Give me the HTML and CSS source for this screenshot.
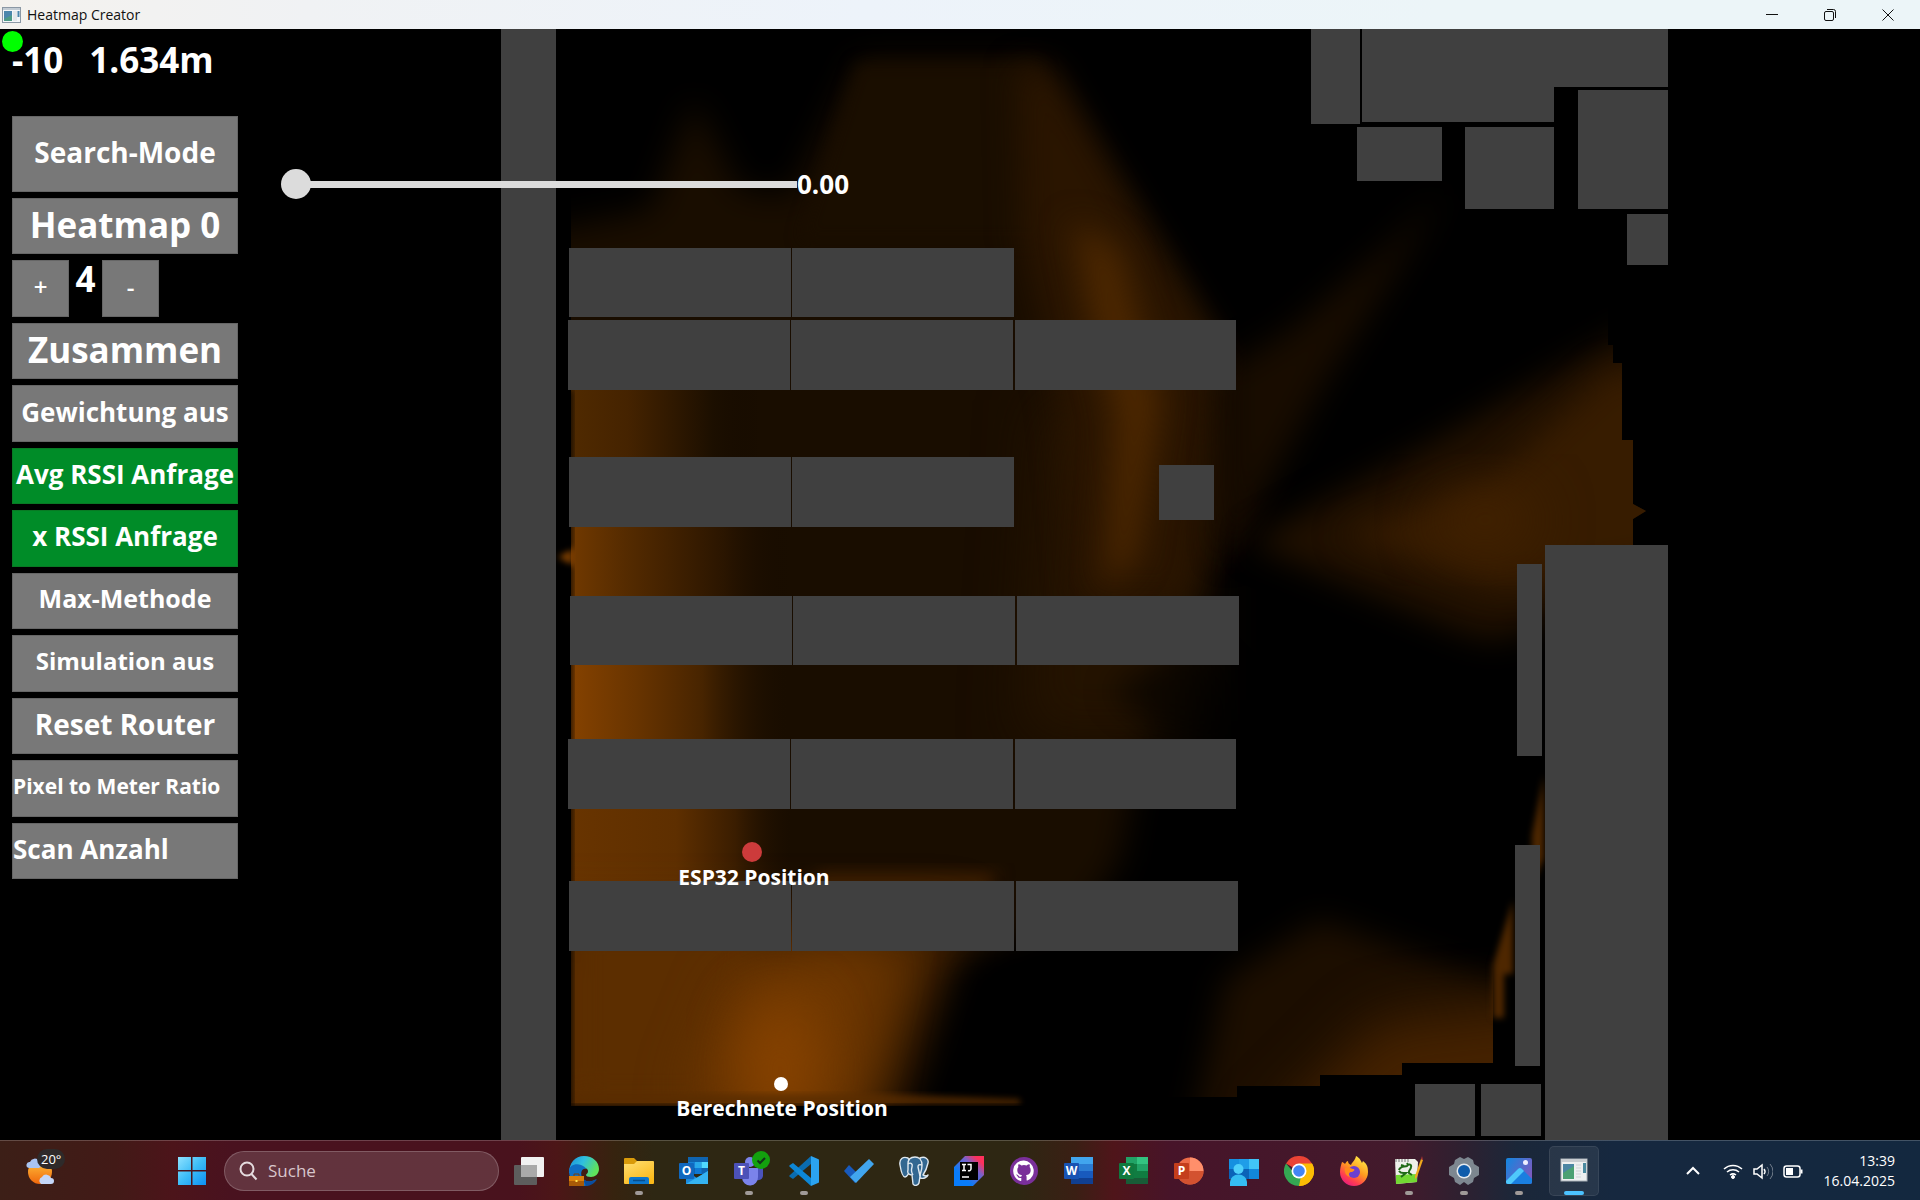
FILE: index.html
```html
<!DOCTYPE html>
<html lang="de">
<head>
<meta charset="utf-8">
<title>Heatmap Creator</title>
<link rel="stylesheet" href="styles.css">
</head>
<body>
<div class="desktop">
  <header class="titlebar">
    <svg class="titlebar-icon" viewBox="0 0 19 16"><rect x=".5" y=".5" width="18" height="15" fill="#f4f6f8" stroke="#8b98a5"/><rect x="1" y="1" width="17" height="2" fill="#c3ccd4"/><rect x="2" y="4" width="8" height="10" fill="#4d9a86"/><path d="M2 4h8v4L2 12z" fill="#4b86ac"/><rect x="11" y="4" width="4" height="10" fill="#e4e7ea"/><rect x="15.500" y="4" width="2" height="6" fill="#4b86ac"/></svg>
    <h1 class="titlebar-text">Heatmap Creator</h1>
    <div class="window-controls">
      <button class="window-button" aria-label="Minimieren"><svg viewBox="0 0 12 12"><path d="M0 5.500h12"/></svg></button>
      <button class="window-button" aria-label="Wiederherstellen"><svg viewBox="0 0 12 12"><rect x=".5" y="2.500" width="9" height="9" rx="1.500"/><path d="M3 .5h6.500a2 2 0 0 1 2 2V9"/></svg></button>
      <button class="window-button" aria-label="Schließen"><svg viewBox="0 0 12 12"><path d="M.5.5l11 11M11.500.5l-11 11"/></svg></button>
    </div>
  </header>

  <main class="stage">
    <svg class="map" viewBox="0 29 1920 1111" preserveAspectRatio="xMinYMin slice">
      <defs>
        <filter id="b3" color-interpolation-filters="sRGB" x="-20%" y="-20%" width="140%" height="140%"><feGaussianBlur stdDeviation="3"/></filter>
        <filter id="b8" color-interpolation-filters="sRGB" x="-30%" y="-30%" width="160%" height="160%"><feGaussianBlur stdDeviation="8"/></filter>
        <filter id="b16" color-interpolation-filters="sRGB" x="-60%" y="-50%" width="220%" height="200%"><feGaussianBlur stdDeviation="16"/></filter>
        <filter id="b28" color-interpolation-filters="sRGB" x="-80%" y="-60%" width="260%" height="220%"><feGaussianBlur stdDeviation="28"/></filter>
        <clipPath id="hall"><path d="M571 29H1290V700H1240V1106H571z"/></clipPath>
        <clipPath id="fan"><path d="M1200 300H1608V345H1613V363H1622V440H1633V504L1646 511L1633 519V720H1200z"/></clipPath>
        <clipPath id="lower"><path d="M1130 860H1493V1063H1402V1075H1320V1086H1237V1097H1130z"/></clipPath>
        <linearGradient id="gA" gradientUnits="userSpaceOnUse" x1="571" x2="760" y1="0" y2="0"><stop offset="0" stop-color="#502a00"/><stop offset=".3" stop-color="#452300"/><stop offset=".75" stop-color="#1c0f00"/><stop offset="1" stop-color="#140a00" stop-opacity="0"/></linearGradient>
        <linearGradient id="gB" gradientUnits="userSpaceOnUse" x1="571" x2="790" y1="0" y2="0"><stop offset="0" stop-color="#713900"/><stop offset=".25" stop-color="#552b00"/><stop offset=".7" stop-color="#2a1500"/><stop offset="1" stop-color="#140a00" stop-opacity="0"/></linearGradient>
        <linearGradient id="gC" gradientUnits="userSpaceOnUse" x1="571" x2="790" y1="0" y2="0"><stop offset="0" stop-color="#854200"/><stop offset=".3" stop-color="#683400"/><stop offset=".6" stop-color="#472400"/><stop offset="1" stop-color="#180d00" stop-opacity="0"/></linearGradient>
        <linearGradient id="gD" gradientUnits="userSpaceOnUse" x1="571" x2="790" y1="0" y2="0"><stop offset="0" stop-color="#683400"/><stop offset=".48" stop-color="#5e2f00"/><stop offset=".75" stop-color="#3a1d00"/><stop offset="1" stop-color="#201000" stop-opacity="0"/></linearGradient>
      </defs>
      <rect y="29" width="1920" height="1111" fill="#000"/>

      <g clip-path="url(#hall)">
        <path d="M500 330V240L650 210L694 100L740 190L790 195L860 60H1040L1240 380V520L1160 640L1120 860L1050 960H500z" fill="#190d00" filter="url(#b16)"/>
        <path d="M858 64H1040L1060 240H800z" fill="#1a0e00" filter="url(#b8)"/>
        <path d="M1040 400H1200V740H1020z" fill="#241300" filter="url(#b28)"/>
        <path d="M1018 68H1050L1110 170L1215 340L1190 600H1080L1060 400L1022 240z" fill="#2a1500" filter="url(#b16)"/>
        <path d="M1072 220L1120 250L1162 400L1135 560L1105 590L1115 420L1090 320z" fill="#4c2700" filter="url(#b16)"/>
        <path d="M1110 690L1170 740L1240 760V690L1190 640z" fill="#000" opacity=".6" filter="url(#b16)"/>
        <rect x="571" y="320" width="200" height="150" fill="url(#gA)"/>
        <rect x="571" y="500" width="220" height="120" fill="url(#gB)"/>
        <rect x="571" y="640" width="220" height="110" fill="url(#gC)"/>
        <rect x="571" y="780" width="220" height="120" fill="url(#gD)"/>
        <path d="M820 872H1000L980 900H800z" fill="#3a1d00" filter="url(#b8)"/>
        <path d="M480 920H960L860 1180H480z" fill="#5c2e00" filter="url(#b28)"/>
        <path d="M571 920H760L720 1106H571z" fill="#5c2e00" filter="url(#b16)"/>
        <path d="M740 980L880 940L850 1106H690z" fill="#703800" filter="url(#b28)"/>
        <ellipse cx="780" cy="1070" rx="36" ry="70" fill="#884300" filter="url(#b28)"/>
        <path d="M1030 930L970 970L925 1140H1300V930z" fill="#000" filter="url(#b16)"/>
        <path d="M571 1094H880L1020 1099V1106H571z" fill="#5a2d00" opacity=".8" filter="url(#b3)"/>
      </g>
      <path d="M558 557L573 548V566z" fill="#7a3d00" filter="url(#b3)"/>
      <path d="M564 390H573V548H564zM564 566H573V1108H564z" fill="#000" opacity=".7" filter="url(#b3)"/>
      <path d="M566 1105H1030V1114H566z" fill="#000" opacity=".8" filter="url(#b3)"/>

      <path d="M1445 190L1390 245L1290 330L1225 370V560L1260 500L1320 390L1390 280z" fill="#180c00" filter="url(#b16)"/>

      <g clip-path="url(#fan)">
        <path d="M1248 543L1420 450L1630 330H1680V560L1500 640L1470 635z" fill="#201000" filter="url(#b16)"/>
        <path d="M1340 535L1490 480L1610 370H1680V560L1500 590z" fill="#371c00" filter="url(#b16)"/>
        <ellipse cx="1485" cy="520" rx="50" ry="30" fill="#432200" filter="url(#b28)"/>
      </g>

      <g clip-path="url(#lower)">
        <path d="M1190 1140L1225 980L1320 920L1540 1000V1140z" fill="#1c0e00" filter="url(#b16)"/>
        <path d="M1260 1140L1380 1020L1560 1000V1140z" fill="#452200" filter="url(#b28)"/>
      </g>
      <path d="M1544 775V858L1532 885V835zM1513 900V974H1504V1018H1493V965z" fill="#4e2700" filter="url(#b3)"/>

      <g class="shelves">
        <rect x="501" y="29" width="55" height="1111"/>
        <rect x="569" y="248" width="222" height="69"/><rect x="792" y="248" width="222" height="69"/>
        <rect x="568" y="320" width="222" height="70"/><rect x="791" y="320" width="222" height="70"/><rect x="1015" y="320" width="221" height="70"/>
        <rect x="569" y="457" width="222" height="70"/><rect x="792" y="457" width="222" height="70"/>
        <rect x="1159" y="465" width="55" height="55"/>
        <rect x="570" y="596" width="222" height="69"/><rect x="793" y="596" width="222" height="69"/><rect x="1017" y="596" width="222" height="69"/>
        <rect x="568" y="739" width="222" height="70"/><rect x="791" y="739" width="222" height="70"/><rect x="1015" y="739" width="221" height="70"/>
        <rect x="569" y="881" width="222" height="70"/><rect x="792" y="881" width="222" height="70"/><rect x="1016" y="881" width="222" height="70"/>
        <rect x="1311" y="29" width="49" height="95"/>
        <path d="M1362 29H1668V87H1554V122H1362z"/>
        <rect x="1357" y="127" width="85" height="54"/><rect x="1465" y="127" width="89" height="82"/>
        <rect x="1578" y="90" width="90" height="119"/><rect x="1627" y="214" width="41" height="51"/>
        <rect x="1545" y="545" width="123" height="595"/>
        <rect x="1517" y="564" width="25" height="192"/><rect x="1515" y="845" width="25" height="221"/>
        <rect x="1415" y="1084" width="60" height="52"/><rect x="1481" y="1084" width="60" height="52"/>
      </g>

      <circle cx="752" cy="852" r="10" fill="#cc3b3b"/>
      <text class="map-label" x="754" y="885">ESP32 Position</text>
      <circle cx="781" cy="1084" r="7" fill="#fff"/>
      <text class="map-label" x="782" y="1116">Berechnete Position</text>
    </svg>

    <div class="overlay">
      <span class="status-dot"></span>
      <aside class="sidebar">
        <p class="readout"><span>-10</span><span>1.634m</span></p>
        <button class="tool tool-tall size-28">Search-Mode</button>
        <div class="tool-list">
          <button class="tool size-35">Heatmap 0</button>
          <div class="stepper">
            <button class="tool tool-step size-24">+</button>
            <output class="stepper-value">4</output>
            <button class="tool tool-step size-24">-</button>
          </div>
          <button class="tool size-35">Zusammen</button>
          <button class="tool size-26">Gewichtung aus</button>
          <button class="tool tool-on size-26">Avg RSSI Anfrage</button>
          <button class="tool tool-on size-26">x RSSI Anfrage</button>
          <button class="tool size-25">Max-Methode</button>
          <button class="tool size-24">Simulation aus</button>
          <button class="tool size-28">Reset Router</button>
          <button class="tool tool-left size-21">Pixel to Meter Ratio</button>
          <button class="tool tool-left size-26">Scan Anzahl</button>
        </div>
      </aside>
      <div class="slider">
        <input class="slider-input" id="level" type="range" min="0" max="1" step="0.01" value="0">
        <label class="slider-value" for="level">0.00</label>
      </div>
    </div>
  </main>

  <footer class="taskbar">
    <button class="weather" aria-label="Wetter">
      <svg viewBox="0 0 30 30"><defs><linearGradient id="sun" x2="0" y2="1"><stop stop-color="#ffc23c"/><stop offset="1" stop-color="#f0670c"/></linearGradient></defs><circle cx="14" cy="16" r="12" fill="url(#sun)"/><path d="M3 12a3 3 0 0 1 1-6 5 5 0 0 1 9-1 4 4 0 0 1 0 7z" fill="#a9c4f2"/><path d="M15 28a4 4 0 0 1 1-7 5 5 0 0 1 9 1 3 3 0 0 1 0 6z" fill="#c4d6f8"/></svg>
      <span class="weather-badge">20°</span>
    </button>
    <nav class="apps">
      <button class="app" aria-label="Start"><svg viewBox="0 0 30 30"><defs><linearGradient id="win" gradientUnits="userSpaceOnUse" x1="1" y1="1" x2="29" y2="29"><stop stop-color="#8fe2ff"/><stop offset=".5" stop-color="#3cbcf7"/><stop offset="1" stop-color="#0c90f3"/></linearGradient></defs><path fill="url(#win)" d="M1 1h13v13H1zM15.500 1H29v13H15.500zM1 15.500h13V29H1zM15.500 15.500H29V29H15.500z"/></svg></button>
      <label class="search"><svg viewBox="0 0 20 20"><circle cx="9" cy="8" r="6.500"/><path d="M13.500 13l5 5.500"/></svg><input class="search-input" type="text" placeholder="Suche"></label>
      <button class="app" aria-label="Aktive Anwendungen"><svg viewBox="0 0 30 30"><rect x="7" y="1" width="23" height="20" rx="1" fill="#f1f1f1"/><rect y="9" width="23" height="20" rx="1" fill="#5d5d5d"/><rect x="7" y="9" width="16" height="12" fill="#a9a9a9"/></svg></button>
      <button class="app" aria-label="Edge"><svg viewBox="0 0 30 30"><defs><linearGradient id="ed" x2="1" y2=".4"><stop stop-color="#1a8fd6"/><stop offset=".5" stop-color="#2fbfe0"/><stop offset="1" stop-color="#5fe35c"/></linearGradient></defs><path d="M0 17C0 7 6 0 15 0c9 0 15 6 15 13 0 5-4 8-8 8-3 0-5-1-5-2 0-1 2-1 2-4 0-2-2-3-4-3z" fill="url(#ed)"/><path d="M0 15c0-5 6-8 12-6 3 1 5 3 5 4-4-1-6 4-4 8 2 5 9 6 14 2-2 4-7 7-12 7C6 30 0 24 0 15z" fill="#0f6fc4"/><path d="M13 21c2 5 9 6 15 2-2 4-6 7-11 7z" fill="#0b4d9e"/><rect y="20" width="15" height="10" fill="#d97f0c"/><path d="M0 25h15v5H0z" fill="#a85a07"/><path d="M5 20v-2h5v2" fill="none" stroke="#7c4108"/><rect x="6.500" y="24" width="2" height="2" fill="#ffe34f"/></svg></button>
      <button class="app is-running" aria-label="Explorer"><svg viewBox="0 0 30 30"><defs><linearGradient id="fo" x2=".6" y2="1"><stop stop-color="#ffdf73"/><stop offset="1" stop-color="#fbb91a"/></linearGradient></defs><path d="M0 3a1 1 0 0 1 1-1h9l3 3v5H0z" fill="#d99a0a"/><path d="M0 8h10l3-3h16a1 1 0 0 1 1 1v21a1 1 0 0 1-1 1H1a1 1 0 0 1-1-1z" fill="url(#fo)"/><path d="M5 28v-5a2 2 0 0 1 2-2h16a2 2 0 0 1 2 2v5z" fill="#0d77cc"/><path d="M9 24.500h12" stroke="#064d8c" stroke-width="1.500"/></svg></button>
      <button class="app" aria-label="Outlook"><svg viewBox="0 0 30 30"><rect x="9" y="1" width="20" height="17" fill="#0f64b0"/><path d="M9 6h7v6H9z" fill="#1782d6"/><path d="M16 6h6.500v6H16z" fill="#28a8ea"/><path d="M22.500 6H29v6h-6.500z" fill="#50d9ff"/><path d="M16 12h6.500v6H16z" fill="#0f78d4"/><path d="M7 28V15l11 7 11-7v13z" fill="#1b8ce0"/><path d="M7 28l22-13v13z" fill="#35b3f1"/><rect y="7" width="15" height="16" rx="1" fill="#1068bf"/><text class="glyph" x="7.500" y="19">O</text></svg></button>
      <button class="app is-running" aria-label="Teams"><svg viewBox="0 0 30 30"><circle cx="25" cy="8" r="3.500" fill="#5059c9"/><circle cx="16" cy="6" r="5" fill="#7b83eb"/><path d="M20 12h9v8a5 5 0 0 1-9 2z" fill="#4b53bc"/><path d="M8 12h16v9a8 8 0 0 1-16 1z" fill="#7b83eb"/><rect y="7" width="15" height="16" rx="1" fill="#4c51b8"/><text class="glyph" x="7.500" y="19">T</text></svg><svg class="app-badge" viewBox="0 0 18 18"><circle cx="9" cy="9" r="9" fill="#13a10e"/><path d="M5.500 9.500L8 12l5-5" fill="none" stroke="#12331a" stroke-width="2"/></svg></button>
      <button class="app is-running" aria-label="Visual Studio Code"><svg viewBox="0 0 30 30"><path d="M22 0v8L4 23l-3-2c-1-1-1-1 0-2z" fill="#0a6cb0"/><path d="M22 30v-8L4 7 1 9c-1 1-1 1 0 2z" fill="#0d87d6"/><path d="M22 0l7 3c1 0 1 1 1 2v20c0 1 0 2-1 2l-7 3z" fill="#2ba3f0"/></svg></button>
      <button class="app" aria-label="To Do"><svg viewBox="0 0 30 30"><path d="M0 15l5-6 12 12-6 6z" fill="#185abd"/><path d="M6 21L25 3l5 5-18 19z" fill="#41a5ee"/></svg></button>
      <button class="app" aria-label="pgAdmin"><svg viewBox="0 0 30 30"><g fill="#336791" stroke="#dfe8ef" stroke-width="1.400" stroke-linejoin="round"><path d="M9 2C4 0 0 3 1 9c1 6 3 12 5 12 2 0 3-3 4-4l1-11z"/><path d="M21 2c5-2 9 1 8 5-1 5-3 9-5 12 2 1 4 1 5 0-1 3-5 4-8 3V8z"/><path d="M9 8c0-5 3-7 7-7s7 3 7 8c0 6-2 8-2 11l-1 7c-1 3-5 3-6 1l-1-9c-3 0-5-2-4-5z"/><path d="M9 8c3-2 5 0 4 3-1 3-1 5 1 8M23 9c-3-1-4 0-4 2l2 9" fill="none"/></g></svg></button>
      <button class="app" aria-label="IntelliJ IDEA"><svg viewBox="0 0 30 30"><defs><linearGradient id="ij" x1="0" y1="1" x2="1" y2="0"><stop offset=".3" stop-color="#087cfa"/><stop offset=".65" stop-color="#7c60c8"/><stop offset=".85" stop-color="#fe315d"/></linearGradient></defs><path d="M11 0h19v19L19 30H0V11z" fill="url(#ij)"/><rect x="6" y="6" width="18" height="18" fill="#000"/><path d="M8 8.500h4M10 8.500v6M8 14.500h4M13.500 8.500H17v4.500a2 2 0 0 1-3 1.500M8 21h7" fill="none" stroke="#fff" stroke-width="1.500"/></svg></button>
      <button class="app" aria-label="GitHub"><svg viewBox="0 0 30 30"><circle cx="15" cy="15" r="14" fill="#7a2f9a"/><path d="M15 4.500a10.500 10.500 0 0 0-3.500 20.500c.5 0 .8-.2.800-.6v-2.400c-2.900.6-3.500-1.200-3.500-1.200-.5-1.200-1.200-1.600-1.200-1.600-.9-.7.1-.6.1-.6 1 .1 1.600 1 1.600 1 1 1.700 2.500 1.200 3.100.9.1-.7.400-1.200.7-1.400-2.300-.3-4.800-1.200-4.800-5.200 0-1.200.4-2.100 1.100-2.800-.1-.3-.5-1.400.1-2.800 0 0 .9-.3 2.900 1.100a10 10 0 0 1 5.200 0c2-1.400 2.900-1.100 2.900-1.100.6 1.400.2 2.500.1 2.800.7.700 1.100 1.600 1.100 2.800 0 4-2.500 4.900-4.800 5.200.4.300.7 1 .7 2v2.900c0 .4.300.7.8.6A10.500 10.500 0 0 0 15 4.500z" fill="#fff"/></svg></button>
      <button class="app" aria-label="Word"><svg viewBox="0 0 30 30"><path d="M7 1h22v7H7z" fill="#41a5ee"/><path d="M7 8h22v7H7z" fill="#2b7cd3"/><path d="M7 15h22v7H7z" fill="#185abd"/><path d="M7 22h22v6H7z" fill="#103f91"/><rect y="7" width="15" height="16" rx="1" fill="#1853b3"/><text class="glyph" x="7.500" y="19">W</text></svg></button>
      <button class="app" aria-label="Excel"><svg viewBox="0 0 30 30"><path d="M7 1h11v7H7z" fill="#21a366"/><path d="M18 1h11v7H18z" fill="#33c481"/><path d="M7 8h11v7H7z" fill="#107c41"/><path d="M18 8h11v7H18z" fill="#21a366"/><path d="M7 15h22v7H7z" fill="#107c41"/><path d="M7 22h22v6H7z" fill="#185c37"/><rect y="7" width="15" height="16" rx="1" fill="#0f7a3f"/><text class="glyph" x="7.500" y="19">X</text></svg></button>
      <button class="app" aria-label="PowerPoint"><svg viewBox="0 0 30 30"><circle cx="16" cy="15" r="13.500" fill="#ed6c47"/><path d="M16 1.500A13.500 13.500 0 0 1 29.500 15H16z" fill="#ff8f6b"/><path d="M2.500 15h27a13.500 13.500 0 0 1-27 0z" fill="#d35230"/><rect y="7" width="15" height="16" rx="1" fill="#c43e1c"/><text class="glyph" x="7.500" y="19">P</text></svg></button>
      <button class="app" aria-label="Remotehilfe"><svg viewBox="0 0 30 30"><path d="M0 3h20v20H0z" fill="#0b63b8"/><path d="M0 3h10v10H0z" fill="#1590e0"/><path d="M20 3h10v10H20z" fill="#41c4f8"/><path d="M20 13h10v10H20z" fill="#1287dc"/><path d="M10 3h10v10H10z" fill="#1f9de8"/><circle cx="9.500" cy="13" r="5" fill="#4fd0fa"/><path d="M1 30v-4a8 7 0 0 1 17 0v4z" fill="#35bdf2"/></svg></button>
      <button class="app" aria-label="Chrome"><svg viewBox="0 0 30 30"><path d="M15 15L2 7.500a15 15 0 0 1 26 0z" fill="#ea4335"/><path d="M15 15L28 7.500A15 15 0 0 1 15 30z" fill="#fbbc04"/><path d="M2 7.500L12 19l5 1-2 10A15 15 0 0 1 2 7.500z" fill="#34a853"/><path d="M15 7.500h13a15 15 0 0 1-13 22.500l7-12z" fill="#fbbc04"/><circle cx="15" cy="15" r="7.500" fill="#fff"/><circle cx="15" cy="15" r="5.800" fill="#4285f4"/></svg></button>
      <button class="app" aria-label="Firefox"><svg viewBox="0 0 30 30"><defs><linearGradient id="ff" x1=".8" y1="0" x2=".2" y2="1"><stop stop-color="#fff04a"/><stop offset=".45" stop-color="#ff9a1f"/><stop offset=".75" stop-color="#ff3f4f"/><stop offset="1" stop-color="#e31587"/></linearGradient></defs><path d="M3 6c1 0 2 1 3 2 1-2 2-3 3-3 0 2 1 3 3 4 1-3 4-4 5-9 4 2 5 5 6 7l1-2c4 3 5 6 5 11a14 14 0 0 1-28 0c0-4 1-7 2-10z" fill="url(#ff)"/><circle cx="15" cy="16" r="6" fill="#6b3fd0"/><path d="M6 12c3-1 5 0 8 1 2 0 2 2-1 3-3 0-4 2-2 5-4-1-6-5-5-9z" fill="#ff8b1c"/></svg></button>
      <button class="app is-running" aria-label="Notepad++"><svg viewBox="0 0 30 30"><path d="M1 3h20l3 3-1 20-21 2z" fill="#eef1ea"/><path d="M2 19l21-1v8L2 28z" fill="#72d832"/><path d="M2 3v3M5 3v3M8 3v3M11 3v3M14 3v3" stroke="#777"/><path d="M5 14c1-4 5-3 8-4 2-3 5-1 4 1 0 3-3 3-2 6l3 2M5 15c2 3 4 2 7 2l-5 4M10 10l-3-1M14 9l-1-2" fill="none" stroke="#1f6b16" stroke-width="2"/><path d="M27 3l2 1-6 17-2 2v-3z" fill="#f0a91c"/><path d="M27 3l1-3 1 4z" fill="#a33"/></svg></button>
      <button class="app is-running" aria-label="Einstellungen"><svg viewBox="0 0 30 30"><path d="M11 1l4 2 4-2 5 3 1 4 5 3v8l-5 3-1 4-5 3-4-3-4 3-5-3-1-4-5-3v-8l5-3 1-4z" fill="#7d8790"/><circle cx="15" cy="15" r="7.500" fill="#e4e9ee"/><circle cx="15" cy="15" r="6" fill="#0f5cab"/></svg></button>
      <button class="app is-running" aria-label="Fotos"><svg viewBox="0 0 30 30"><defs><linearGradient id="ph" x2="1" y2=".6"><stop stop-color="#1187e0"/><stop offset="1" stop-color="#7b5bc0"/></linearGradient></defs><rect x="2" y="2" width="26" height="26" rx="2" fill="url(#ph)"/><path d="M2 25l12-12q2-2 4 0l10 10v3a2 2 0 0 1-2 2H4a2 2 0 0 1-2-2z" fill="#1a7fe0"/><path d="M2 25l12-12q2-2 4 0l2 2L7 28H4a2 2 0 0 1-2-2z" fill="#4fc8fb"/><circle cx="21.500" cy="6.500" r="2.500" fill="#eef"/></svg></button>
      <button class="app is-active" aria-label="Heatmap Creator"><svg viewBox="0 0 30 30"><rect x="2" y="3" width="26" height="22" fill="#eef0f1" stroke="#aab2b8"/><rect x="2" y="3" width="26" height="3" fill="#c9cdd1"/><rect x="4" y="8" width="11" height="15" fill="#4b86a4"/><path d="M4 23V17L15 10v13z" fill="#4ba173"/><path d="M17 9h5M17 12h5M17 15h5M17 18h5M17 21h5" stroke="#cfd3d6"/><rect x="24" y="7" width="3" height="10" fill="#4b8aa0"/></svg></button>
    </nav>
    <div class="tray">
      <svg class="tray-icon" viewBox="0 0 20 20"><path d="M4 13l6-6 6 6" stroke-width="2"/></svg>
      <svg class="tray-icon" viewBox="0 0 20 20"><path d="M1 8a13 13 0 0 1 18 0M4 11a9 9 0 0 1 12 0M7 14a5 5 0 0 1 6 0" stroke-width="1.500"/><circle cx="10" cy="16" r="1.500" fill="#fff"/></svg>
      <svg class="tray-icon" viewBox="0 0 20 20"><path d="M1 8h3l5-4v13l-5-4H1zM11 8a4 4 0 0 1 0 5" stroke-width="1.500"/><path d="M14 6a7 7 0 0 1 0 9M17 3a11 11 0 0 1 0 15" opacity=".4"/></svg>
      <svg class="tray-icon" viewBox="0 0 20 20"><rect x="1" y="5" width="16" height="11" rx="2.500" stroke-width="1.500"/><rect x="3" y="7" width="7" height="7" fill="#fff" stroke="none"/><path d="M18.500 8.500v4" stroke-width="2"/></svg>
      <div class="clock"><time>13:39</time><time>16.04.2025</time></div>
    </div>
  </footer>
</div>
</body>
</html>
```
FILE: styles.css
```css
*,
*::before,
*::after {
  box-sizing: border-box;
}

body {
  margin: 0;
  background: #000;
  color: #fff;
  font-family: "Open Sans", "Noto Sans", sans-serif;
}

button {
  margin: 0;
  padding: 0;
  border: 0;
  background: none;
  color: inherit;
  font: inherit;
}

.desktop {
  display: flex;
  flex-direction: column;
  height: 100vh;
}

/* Title bar */
.titlebar {
  display: flex;
  align-items: center;
  height: 29px;
  padding: 0 3px 0 2px;
  background: linear-gradient(90deg, #f4f2ee 0, #f0f2f4 16%, #edf3fa 45%, #ecf5f8 75%);
  color: #111;
}

.titlebar-icon {
  width: 19px;
  height: 16px;
  margin-right: 6px;
}

.titlebar-text {
  margin: 0;
  font-size: 14px;
  font-weight: 400;
  line-height: 20px;
}

.window-controls {
  display: flex;
  height: 100%;
  margin-left: auto;
}

.window-button {
  display: flex;
  align-items: center;
  justify-content: center;
  width: 58px;
}

.window-button svg {
  width: 12px;
  height: 12px;
  fill: none;
  stroke: #111;
}

/* Stage: floor plan with the tools laid over it */
.stage {
  display: grid;
  flex: 1;
  min-height: 0;
  overflow: hidden;
}

.map,
.overlay {
  grid-area: 1 / 1;
  min-width: 0;
  min-height: 0;
}

.map {
  width: 100%;
  height: 100%;
}

.shelves {
  fill: #404040;
}

.map-label {
  fill: #fff;
  font-size: 21px;
  font-weight: 700;
  text-anchor: middle;
}

.overlay {
  position: relative;
  display: flex;
  align-items: flex-start;
  padding: 6px 12px 0;
}

.status-dot {
  position: absolute;
  top: 2px;
  left: 2px;
  width: 21px;
  height: 21px;
  border-radius: 50%;
  background: #0f0;
}

.sidebar {
  position: relative;
  width: 226px;
}

.readout {
  display: flex;
  gap: 26px;
  margin: 0 0 32px;
  font-size: 35px;
  font-weight: 700;
  line-height: 49px;
}

.tool {
  width: 100%;
  padding-bottom: 4px;
  border: 1px solid #666;
  background: #787878;
  font-weight: 700;
  line-height: 1;
  white-space: nowrap;
}

.tool-tall {
  height: 76px;
  margin-bottom: 6px;
}

.tool-step {
  font-weight: 600;
}

.tool-on {
  border-color: #087a24;
  background: #008c28;
}

.tool-left {
  text-align: left;
}

.tool-list {
  display: grid;
  grid-template-columns: minmax(0, 1fr);
  grid-auto-rows: 1fr;
  gap: 6px;
  height: 681px;
}

.stepper {
  display: grid;
  grid-template-columns: 57px 33px 57px;
}

.stepper-value {
  font-size: 35px;
  font-weight: 700;
  line-height: 38px;
  text-align: center;
}

.size-21 { font-size: 21px; }
.size-24 { font-size: 24px; }
.size-25 { font-size: 25px; }
.size-26 { font-size: 26px; }
.size-28 { font-size: 28px; }
.size-35 { font-size: 35px; }

.slider {
  display: flex;
  align-items: center;
  margin: 131px 0 0 43px;
}

.slider-input {
  width: 516px;
  height: 30px;
  margin: 0;
  appearance: none;
  background: linear-gradient(#dcdcdc, #dcdcdc) 15px 50% / 100% 7px no-repeat;
}

.slider-input::-webkit-slider-thumb {
  width: 30px;
  height: 30px;
  border-radius: 50%;
  appearance: none;
  background: #dcdcdc;
}

.slider-value {
  font-size: 26px;
  font-weight: 700;
  line-height: 36px;
}

/* Taskbar */
.taskbar {
  display: flex;
  height: 60px;
  border-top: 1px solid rgba(255, 255, 255, 0.2);
  background: linear-gradient(90deg, #3c1f17 0, #421a17 6%, #4c141a 9%, #49121f 12%, #49121d 27%, #4c1617 29%, #36230f 32%, #2e2713 34%, #2e2713 53%, #3a1f14 56%, #4f151a 58%, #471429 61%, #421a2c 73%, #2f2030 76%, #1b2739 79%, #16283f 84%, #13283f 100%);
}

.weather {
  position: relative;
  width: 167px;
  text-align: left;
}

.weather svg {
  display: block;
  width: 30px;
  height: 30px;
  margin-left: 26px;
}

.weather-badge {
  position: absolute;
  top: 8px;
  left: 37px;
  padding: 0 4px;
  border-radius: 10px;
  background: #2e2a2a;
  font-size: 13px;
  line-height: 20px;
}

.apps {
  display: flex;
  align-items: center;
  gap: 5px;
}

.app {
  position: relative;
  display: flex;
  align-items: center;
  justify-content: center;
  width: 50px;
  height: 50px;
  border-radius: 5px;
}

.app svg {
  width: 30px;
  height: 30px;
}

.app .app-badge {
  position: absolute;
  top: 5px;
  right: 4px;
  width: 18px;
  height: 18px;
}

.glyph {
  fill: #fff;
  font-size: 12px;
  font-weight: 700;
  text-anchor: middle;
}

.is-running::after,
.is-active::after {
  content: "";
  position: absolute;
  bottom: 1px;
  width: 8px;
  height: 4px;
  border-radius: 2px;
  background: #a09a98;
}

.is-active {
  border: 1px solid rgba(255, 255, 255, 0.08);
  background: rgba(255, 255, 255, 0.07);
}

.is-active::after {
  bottom: 0;
  width: 20px;
  background: #4cc2ff;
}

.search {
  display: flex;
  align-items: center;
  gap: 10px;
  width: 275px;
  height: 40px;
  margin-left: 2px;
  padding: 0 13px;
  border: 1px solid rgba(255, 255, 255, 0.2);
  border-radius: 20px;
  background: rgba(255, 255, 255, 0.14);
}

.search svg {
  width: 20px;
  height: 20px;
  fill: none;
  stroke: #e5dcdf;
  stroke-width: 2;
}

.search-input {
  flex: 1;
  min-width: 0;
  padding: 0;
  border: 0;
  outline: 0;
  background: none;
  color: #fff;
  font: inherit;
  font-size: 17px;
}

.search-input::placeholder {
  color: #d8c6cc;
}

.tray {
  display: flex;
  align-items: center;
  gap: 10px;
  margin-left: auto;
  padding-right: 25px;
}

.tray-icon {
  width: 20px;
  height: 20px;
  fill: none;
  stroke: #fff;
}

.tray-icon:first-child {
  margin-right: 10px;
}

.clock {
  display: flex;
  flex-direction: column;
  margin-left: 11px;
  font-size: 14px;
  line-height: 20px;
  text-align: right;
}
```
